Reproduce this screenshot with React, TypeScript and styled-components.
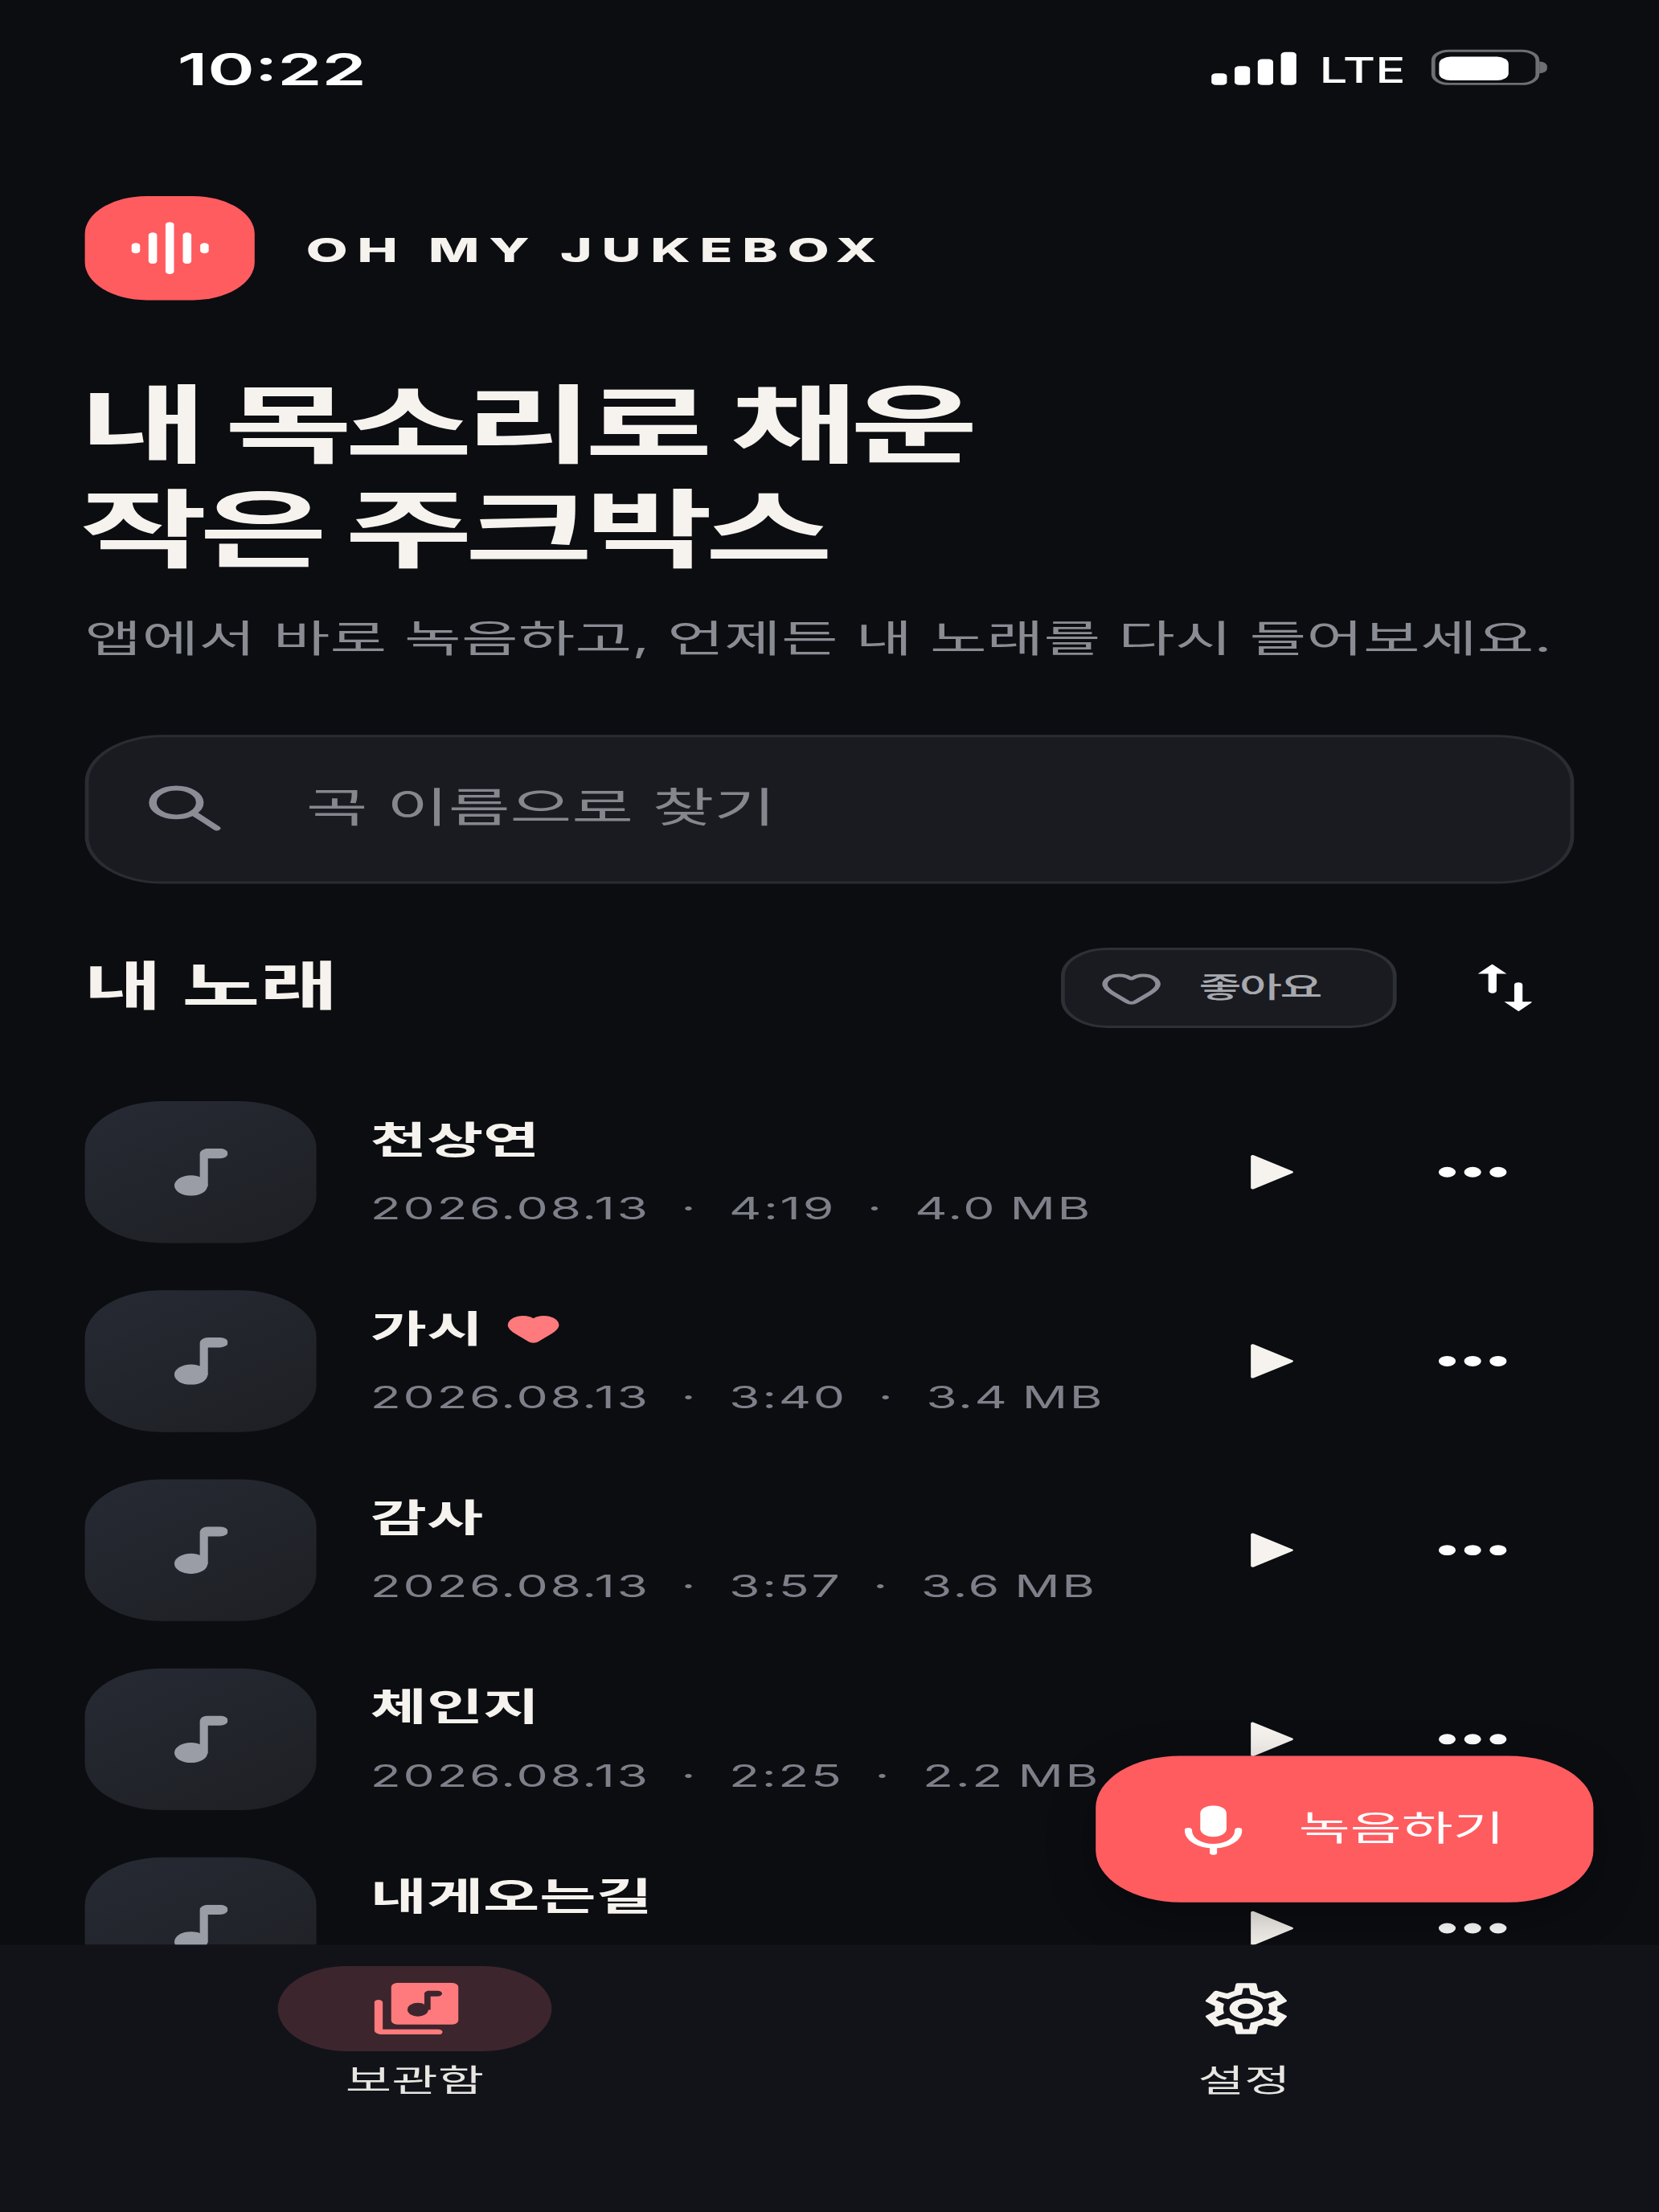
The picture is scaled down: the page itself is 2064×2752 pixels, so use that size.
import React from "react";
import styled, { createGlobalStyle } from "styled-components";
import { Heart } from "lucide-react";
import { MdOutlineSettings } from "react-icons/md";

const GlobalStyle = createGlobalStyle`
  html, body { margin: 0; padding: 0; background: #0b0d11; overflow: hidden; }
  * { box-sizing: border-box; }
`;

const Frame = styled.div`
  width: 2064px;
  height: 2752px;
  overflow: hidden;
`;

/* The reference is a 430x936 phone layout stretched onto the 2064x2752 canvas. */
const Phone = styled.div`
  position: relative;
  width: 430px;
  height: 936px;
  display: flex;
  flex-direction: column;
  overflow: hidden;
  transform: scale(4.8, 2.94);
  transform-origin: 0 0;
  background: #0b0d11;
  color: #f6f3ee;
  font-family: Inter, "Noto Sans CJK KR", sans-serif;
`;

const StatusBar = styled.div`
  flex: none;
  height: 56px;
  display: flex;
  align-items: center;
  padding: 1px 29px 0 46px;
`;
const Clock = styled.span`
  font-size: 18.5px;
  font-weight: 600;
  color: #fff;
`;
const StatusRight = styled.div`
  margin-left: auto;
  display: flex;
  align-items: center;
`;
const Signal = styled.div`
  display: flex;
  align-items: flex-end;
  gap: 1.7px;
  height: 14px;
`;
const SignalBar = styled.span<{ $h: number }>`
  width: 4px;
  height: ${(p) => p.$h}px;
  background: #fff;
  border-radius: 1.2px;
`;
const Lte = styled.span`
  display: inline-block;
  margin: 2px 2.9px 0 6.2px;
  font-size: 15px;
  font-weight: 500;
  line-height: 14px;
  color: #fff;
  transform: scaleX(0.86);
  transform-origin: 0 50%;
`;
const Battery = styled.div`
  width: 28px;
  height: 14.2px;
  padding: 1px 1.1px;
  border: 1px solid #6e6f72;
  border-radius: 4.5px;
  display: flex;
  align-items: center;
`;
const BatteryFill = styled.span`
  width: 18px;
  height: 10px;
  background: #fff;
  border-radius: 3px;
`;
const BatteryNub = styled.span`
  width: 1.6px;
  height: 4.2px;
  margin-left: 0.9px;
  background: #6e6f72;
  border-radius: 0 2px 2px 0;
`;

const Content = styled.main`
  flex: 1;
  min-height: 0;
  overflow: hidden;
  padding: 27px 22px 0;
`;
const Brand = styled.div`
  display: flex;
  align-items: center;
  gap: 13.3px;
`;
const LogoTile = styled.div`
  width: 44px;
  height: 44.3px;
  border-radius: 16px;
  background: #ff5c60;
  display: flex;
  align-items: center;
  justify-content: center;
`;
const BrandName = styled.span`
  font-size: 14px;
  font-weight: 800;
  letter-spacing: 2.46px;
  white-space: nowrap;
`;
const Title = styled.h1`
  margin: 30.4px 0 0 -1.4px;
  font-size: 36px;
  line-height: 44px;
  font-weight: 700;
  letter-spacing: -2px;
  white-space: nowrap;
`;
const Lead = styled.p`
  margin: 12.6px 0 0;
  font-size: 16px;
  line-height: 24px;
  letter-spacing: 0.03px;
  color: #8a8c94;
  white-space: nowrap;
`;
const SearchBox = styled.div`
  margin-top: 28.4px;
  height: 63.6px;
  display: flex;
  align-items: center;
  gap: 21.3px;
  padding: 0 15px;
  background: #1a1b20;
  border: 1px solid #2a2c33;
  border-radius: 20px;
`;
const SearchText = styled.span`
  padding-bottom: 3px;
  font-size: 17.4px;
  color: #85878f;
`;
const SectionRow = styled.div`
  margin-top: 27px;
  height: 34px;
  display: flex;
  align-items: center;
`;
const SectionTitle = styled.h2`
  margin: 0 0 0 -0.3px;
  flex: 1;
  padding-bottom: 2px;
  font-size: 22px;
  line-height: 32px;
  font-weight: 700;
`;
const LikeChip = styled.button`
  width: 87px;
  height: 34px;
  display: flex;
  align-items: center;
  gap: 9.5px;
  padding: 0 0 0 9px;
  background: #1a1b20;
  border: 1px solid #2e3037;
  border-radius: 12px;
  color: #a7a9af;
  font-family: inherit;
  font-size: 12px;
  font-weight: 500;
  letter-spacing: -0.5px;
`;
const LikeLabel = styled.span`
  padding-bottom: 4px;
`;
const SortButton = styled.div`
  width: 46.3px;
  display: flex;
  justify-content: flex-end;
  padding-right: 10.8px;
`;
const SongList = styled.ul`
  list-style: none;
  margin: 30.3px 0 0;
  padding: 0;
  display: flex;
  flex-direction: column;
  gap: 20px;
`;
const Row = styled.li`
  display: flex;
  align-items: center;
  height: 60px;
`;
const Thumb = styled.div`
  flex: none;
  width: 59.7px;
  height: 60px;
  border-radius: 20px;
  background: linear-gradient(145deg, #262a33, #1e1f24);
  display: flex;
  align-items: center;
  justify-content: center;
`;
const RowText = styled.div`
  flex: 1;
  min-width: 0;
  margin-left: 14.3px;
  display: flex;
  flex-direction: column;
  gap: 8px;
`;
const SongName = styled.div`
  display: flex;
  align-items: center;
  gap: 6px;
  font-size: 15.9px;
  line-height: 22px;
  font-weight: 600;
`;
const Meta = styled.div`
  display: flex;
  align-items: center;
  gap: 8.1px;
  font-size: 13px;
  line-height: 18px;
  letter-spacing: 0.55px;
  word-spacing: -0.8px;
  color: #7d7f89;
  white-space: nowrap;
`;
const RowAction = styled.div`
  flex: none;
  width: 53.5px;
  height: 44px;
  display: flex;
  align-items: center;
  justify-content: center;
`;
const RecordButton = styled.button`
  position: absolute;
  left: 283.5px;
  top: 743px;
  width: 129.1px;
  height: 62.3px;
  display: flex;
  align-items: center;
  gap: 14.6px;
  padding: 0 0 0 23.5px;
  border: 0;
  border-radius: 22px;
  background: #ff5c60;
  box-shadow: 0 6px 16px rgba(0, 0, 0, 0.3);
  color: #fff;
  font-family: inherit;
  font-size: 14.5px;
  font-weight: 400;
`;
const RecordLabel = styled.span`
  padding-bottom: 4px;
`;
const BottomNav = styled.nav`
  position: relative;
  flex: none;
  height: 113px;
  display: grid;
  grid-template-columns: 1fr 1fr;
  padding-top: 8.8px;
  background: #111319;
`;
const NavItem = styled.div`
  display: flex;
  flex-direction: column;
  align-items: center;
  gap: 3px;
  font-size: 13px;
  line-height: 18px;
  font-weight: 400;
  color: #e8e6e1;
`;
const NavIcon = styled.div<{ $active?: boolean }>`
  width: 70.7px;
  height: 36px;
  border-radius: 18px;
  display: flex;
  align-items: center;
  justify-content: center;
  background: ${(p) => (p.$active ? "#3c252c" : "transparent")};
  color: #f6f3ee;
`;

const Wave = () => (
  <svg width="22" height="22" viewBox="0 0 22 22" fill="#fff">
    <rect x="1.1" y="8.8" width="2.2" height="4.4" rx="1.1" />
    <rect x="5.5" y="4.4" width="2.2" height="13.2" rx="1.1" />
    <rect x="9.9" y="0" width="2.2" height="22" rx="1.1" />
    <rect x="14.4" y="4.4" width="2.2" height="13.2" rx="1.1" />
    <rect x="18.9" y="8.8" width="2.2" height="4.4" rx="1.1" />
  </svg>
);

const Magnifier = () => (
  <svg width="20" height="20" viewBox="0 0 20 20" fill="none" stroke="#8a8d96" strokeWidth="2" strokeLinecap="round">
    <circle cx="7.7" cy="7.6" r="6.1" />
    <path d="M12.6 12.6l5.6 5.9" />
  </svg>
);

const Note = () => (
  <svg width="14" height="20" viewBox="0 0 14 20" fill="#9a9da6">
    <circle cx="4.5" cy="15.7" r="4.3" />
    <path d="M6.8 16V2.2A2.2 2.2 0 0 1 9 0h3a2.1 2.1 0 0 1 0 4.2H8.9V16z" />
  </svg>
);

const Play = () => (
  <svg width="24" height="24" viewBox="0 0 24 24" fill="#f6f3ee" stroke="#f6f3ee" strokeWidth="1" strokeLinejoin="round">
    <path d="M8.7 5.3v13.4l10-6.7z" />
  </svg>
);

const More = () => (
  <svg width="26" height="10" viewBox="0 0 26 10" fill="#fff">
    <circle cx="7.1" cy="5" r="2.2" />
    <circle cx="13.7" cy="5" r="2.2" />
    <circle cx="20.3" cy="5" r="2.2" />
  </svg>
);

const Sort = () => (
  <svg width="14.4" height="20.4" viewBox="0 0 14 20" fill="#fff">
    <path d="M3.65 0l3.65 4H4.75v7a1.05 1.05 0 0 1-2.1 0V4H0z" />
    <path d="M10.35 19.6L6.7 15.6h2.55v-7a1.05 1.05 0 0 1 2.1 0v7H14z" />
  </svg>
);

const Mic = () => (
  <svg width="15" height="21" viewBox="0 0 15 21" fill="none">
    <rect x="4.1" y="0" width="6.8" height="13.3" rx="3.4" fill="#fff" />
    <path d="M1 10.4c0 4 2.9 6.8 6.5 6.8s6.5-2.8 6.5-6.8M7.5 17.2V20" stroke="#fff" strokeWidth="1.9" strokeLinecap="round" />
  </svg>
);

const Library = () => (
  <svg width="22" height="22" viewBox="0 0 22 22">
    <rect x="4.4" y="0" width="17.4" height="17.7" rx="1.8" fill="#ff7a7c" />
    <path d="M1.1 8.4V20c0 .5.4.9.9.9h14.6" fill="none" stroke="#ff7a7c" strokeWidth="2.2" strokeLinecap="round" />
    <g fill="#3c252c">
      <ellipse cx="11.3" cy="11.4" rx="2.7" ry="2.9" />
      <path d="M13 11.5V4.7c0-.7.5-1.3 1.2-1.3h2.2a1.1 1.1 0 0 1 0 2.4H14.6v5.7z" />
    </g>
  </svg>
);

const songs = [
  { name: "천상연", time: "4:19", size: "4.0 MB" },
  { name: "가시", time: "3:40", size: "3.4 MB", liked: true },
  { name: "감사", time: "3:57", size: "3.6 MB" },
  { name: "체인지", time: "2:25", size: "2.2 MB" },
  { name: "내게오는길", time: "3:12", size: "3.0 MB" },
];

export default function App() {
  return (
    <Frame>
      <GlobalStyle />
      <Phone>
        <StatusBar>
          <Clock>10:22</Clock>
          <StatusRight>
            <Signal>
              <SignalBar $h={5} />
              <SignalBar $h={8} />
              <SignalBar $h={11} />
              <SignalBar $h={14} />
            </Signal>
            <Lte>LTE</Lte>
            <Battery>
              <BatteryFill />
            </Battery>
            <BatteryNub />
          </StatusRight>
        </StatusBar>

        <Content>
          <Brand>
            <LogoTile>
              <Wave />
            </LogoTile>
            <BrandName>OH MY JUKEBOX</BrandName>
          </Brand>
          <Title>
            내 목소리로 채운
            <br />
            작은 주크박스
          </Title>
          <Lead>앱에서 바로 녹음하고, 언제든 내 노래를 다시 들어보세요.</Lead>
          <SearchBox>
            <Magnifier />
            <SearchText>곡 이름으로 찾기</SearchText>
          </SearchBox>
          <SectionRow>
            <SectionTitle>내 노래</SectionTitle>
            <LikeChip>
              <Heart size={16.5} color="#8a8d96" strokeWidth={2} />
              <LikeLabel>좋아요</LikeLabel>
            </LikeChip>
            <SortButton>
              <Sort />
            </SortButton>
          </SectionRow>
          <SongList>
            {songs.map((s) => (
              <Row key={s.name}>
                <Thumb>
                  <Note />
                </Thumb>
                <RowText>
                  <SongName>
                    {s.name}
                    {s.liked && <Heart size={14.5} color="#ff7a7c" fill="#ff7a7c" />}
                  </SongName>
                  <Meta>
                    <span>2026.08.13</span>
                    <span>·</span>
                    <span>{s.time}</span>
                    <span>·</span>
                    <span>{s.size}</span>
                  </Meta>
                </RowText>
                <RowAction>
                  <Play />
                </RowAction>
                <RowAction>
                  <More />
                </RowAction>
              </Row>
            ))}
          </SongList>
        </Content>

        <RecordButton>
          <Mic />
          <RecordLabel>녹음하기</RecordLabel>
        </RecordButton>

        <BottomNav>
          <NavItem>
            <NavIcon $active>
              <Library />
            </NavIcon>
            보관함
          </NavItem>
          <NavItem>
            <NavIcon>
              <MdOutlineSettings size={26} />
            </NavIcon>
            설정
          </NavItem>
        </BottomNav>
      </Phone>
    </Frame>
  );
}
